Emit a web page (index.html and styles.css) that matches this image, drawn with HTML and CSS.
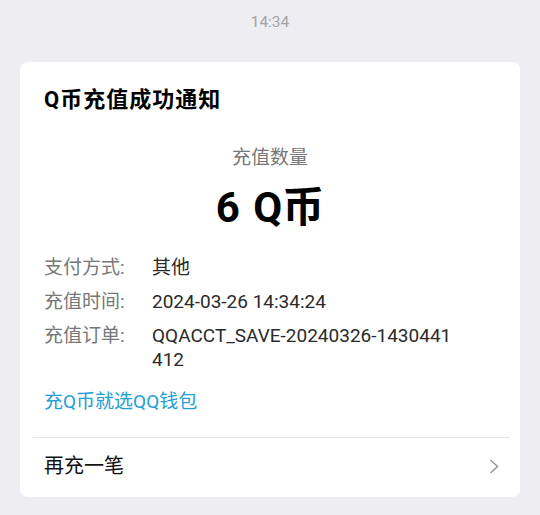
FILE: index.html
```html
<!DOCTYPE html>
<html lang="zh-CN">
<head>
  <meta charset="UTF-8">
  <title>Q币充值成功通知</title>
  <link rel="stylesheet" href="styles.css">
</head>
<body>
  <div class="time">14:34</div>

  <div class="card">
    <h1 class="title">Q币充值成功通知</h1>

    <div class="amount-label">充值数量</div>
    <div class="amount">6 Q币</div>

    <div class="rows">
      <div class="row">
        <span class="label">支付方式:</span>
        <span class="value">其他</span>
      </div>
      <div class="row">
        <span class="label">充值时间:</span>
        <span class="value">2024-03-26 14:34:24</span>
      </div>
      <div class="row">
        <span class="label">充值订单:</span>
        <span class="value">QQACCT_SAVE-20240326-1430441412</span>
      </div>
    </div>

    <div class="link">充Q币就选QQ钱包</div>

    <div class="divider"></div>

    <div class="action">
      <span>再充一笔</span>
      <svg class="chevron" width="10" height="15" viewBox="0 0 10 15">
        <polyline points="1.5,1 8.5,7.5 1.5,14" fill="none" stroke="#9a9a9a" stroke-width="1.6"/>
      </svg>
    </div>
  </div>
</body>
</html>
```

FILE: styles.css
```css
body {
  margin: 0;
  font-family: Roboto, "Noto Sans CJK SC", sans-serif;
  background-color: #ededf2;
}
.time {
  text-align: center;
  color: #a3a3a8;
  font-size: 15.5px;
  line-height: 18px;
  padding-top: 13px;
}
.card {
  margin: 31px 20px 0;
  background-color: #fff;
  border-radius: 8px;
}
.title {
  margin: 0;
  padding: 26px 24px 0;
  font-size: 22px;
  line-height: 24px;
  font-weight: bold;
  color: #000;
  letter-spacing: 1px;
}
.amount-label {
  margin-top: 34px;
  text-align: center;
  font-size: 19px;
  line-height: 24px;
  color: #777;
}
.amount {
  margin-top: 15px;
  text-align: center;
  font-size: 42px;
  line-height: 46px;
  font-weight: bold;
  color: #000;
  word-spacing: 3px;
}
.rows {
  margin-top: 25px;
  padding: 0 24px;
  display: flex;
  flex-direction: column;
  gap: 10px;
}
.row {
  display: flex;
  font-size: 19px;
  line-height: 24px;
}
.row .label {
  width: 108px;
  flex-shrink: 0;
  color: #777;
}
.row .value {
  color: #2a2a2a;
  word-break: break-all;
  width: 304px;
}
.link {
  margin-top: 18px;
  padding: 0 24px;
  font-size: 19px;
  line-height: 24px;
  color: #22a0d6;
}
.divider {
  margin: 23px 10px 0 13px;
  height: 1px;
  background-color: #e6e6e6;
}
.action {
  display: flex;
  align-items: center;
  justify-content: space-between;
  padding: 16px 21px 19px 24px;
  font-size: 20px;
  line-height: 24px;
  color: #111;
}
.chevron {
  display: block;
}
```
